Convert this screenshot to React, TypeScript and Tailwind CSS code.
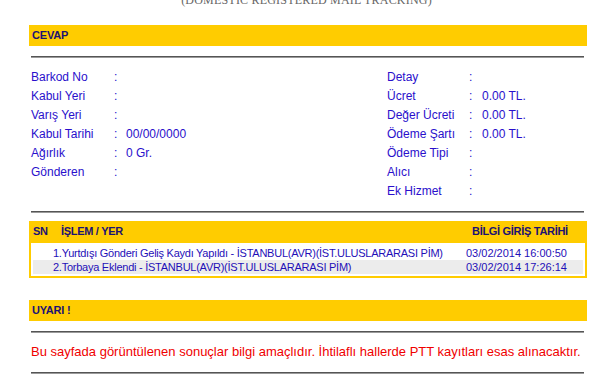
import React from 'react';

const left: [string, string][] = [
  ['Barkod No', ''],
  ['Kabul Yeri', ''],
  ['Varış Yeri', ''],
  ['Kabul Tarihi', '00/00/0000'],
  ['Ağırlık', '0 Gr.'],
  ['Gönderen', ''],
];

const right: [string, string][] = [
  ['Detay', ''],
  ['Ücret', '0.00 TL.'],
  ['Değer Ücreti', '0.00 TL.'],
  ['Ödeme Şartı', '0.00 TL.'],
  ['Ödeme Tipi', ''],
  ['Alıcı', ''],
  ['Ek Hizmet', ''],
];

const moves = [
  {
    text: '1.Yurtdışı Gönderi Geliş Kaydı Yapıldı - İSTANBUL(AVR)(İST.ULUSLARARASI PİM)',
    date: '03/02/2014 16:00:50',
  },
  {
    text: '2.Torbaya Eklendi - İSTANBUL(AVR)(İST.ULUSLARARASI PİM)',
    date: '03/02/2014 17:26:14',
  },
];

function Rule() {
  return <div className="mx-[2px] w-[553px] border-t border-b border-t-[#555] border-b-[#9a9a9a]" />;
}

function Bar({ title }: { title: string }) {
  return (
    <div className="h-[21px] bg-[#ffcc00] flex items-center pl-[3px]">
      <span className="text-[11px] font-bold tracking-[-0.2px] text-[#1c1273]">{title}</span>
    </div>
  );
}

export default function App() {
  return (
    <div className="min-h-screen bg-white overflow-hidden" style={{ fontFamily: '"Liberation Sans", Arial, sans-serif' }}>
      {/* Title (cut off at top) */}
      <div
        className="mt-[-7px] text-center text-[12px] leading-[14px] tracking-[0.2px] text-[#666]"
        style={{ fontFamily: '"Liberation Serif", "Times New Roman", serif' }}
      >
        (DOMESTIC REGISTERED MAIL TRACKING)
      </div>

      <div className="ml-[29px] w-[558px]">
        <div className="mt-[18px]">
          <Bar title="CEVAP" />
        </div>
        <div className="mt-[10px]">
          <Rule />
        </div>

        {/* Details */}
        <div className="mt-[9px] flex text-[12px] text-[#2a0fcc]">
          <div className="w-[358px] pl-[2px]">
            {left.map(([k, v]) => (
              <div key={k} className="h-[19px] flex items-center">
                <span className="w-[83px]">{k}</span>
                <span className="w-[12px]">:</span>
                <span>{v}</span>
              </div>
            ))}
          </div>
          <div>
            {right.map(([k, v]) => (
              <div key={k} className="h-[19px] flex items-center">
                <span className="w-[82px]">{k}</span>
                <span className="w-[13px]">:</span>
                <span>{v}</span>
              </div>
            ))}
          </div>
        </div>

        <div className="mt-[11px]">
          <Rule />
        </div>

        {/* Movements table */}
        <div className="mt-[8px]">
          <div className="h-[20px] bg-[#ffcc00] flex items-center text-[11px] font-bold tracking-[-0.3px] text-[#1c1273]">
            <span className="pl-[4px] w-[32px]">SN</span>
            <span className="w-[411px]">İŞLEM / YER</span>
            <span>BİLGİ GİRİŞ TARİHİ</span>
          </div>
          <div className="border-2 border-[#ffcc00] px-[2px] pt-[3px] pb-[2px] text-[11px] text-[#1f0fb8]">
            {moves.map((m, i) => (
              <div
                key={m.date}
                className={`h-[14px] flex items-center ${i % 2 === 1 ? 'bg-[#ececec]' : 'bg-white'}`}
              >
                <span className="pl-[20px] w-[433px] whitespace-nowrap tracking-[-0.25px]">{m.text}</span>
                <span>{m.date}</span>
              </div>
            ))}
          </div>
        </div>

        <div className="mt-[22px]">
          <Bar title="UYARI !" />
        </div>
        <div className="mt-[10px]">
          <Rule />
        </div>
        <div className="mt-[11px] h-[16px] flex items-center pl-[2px] text-[13px] text-[#f00000] whitespace-nowrap">
          Bu sayfada görüntülenen sonuçlar bilgi amaçlıdır. İhtilaflı hallerde PTT kayıtları esas alınacaktır.
        </div>
        <div className="mt-[12px]">
          <Rule />
        </div>
      </div>
    </div>
  );
}
